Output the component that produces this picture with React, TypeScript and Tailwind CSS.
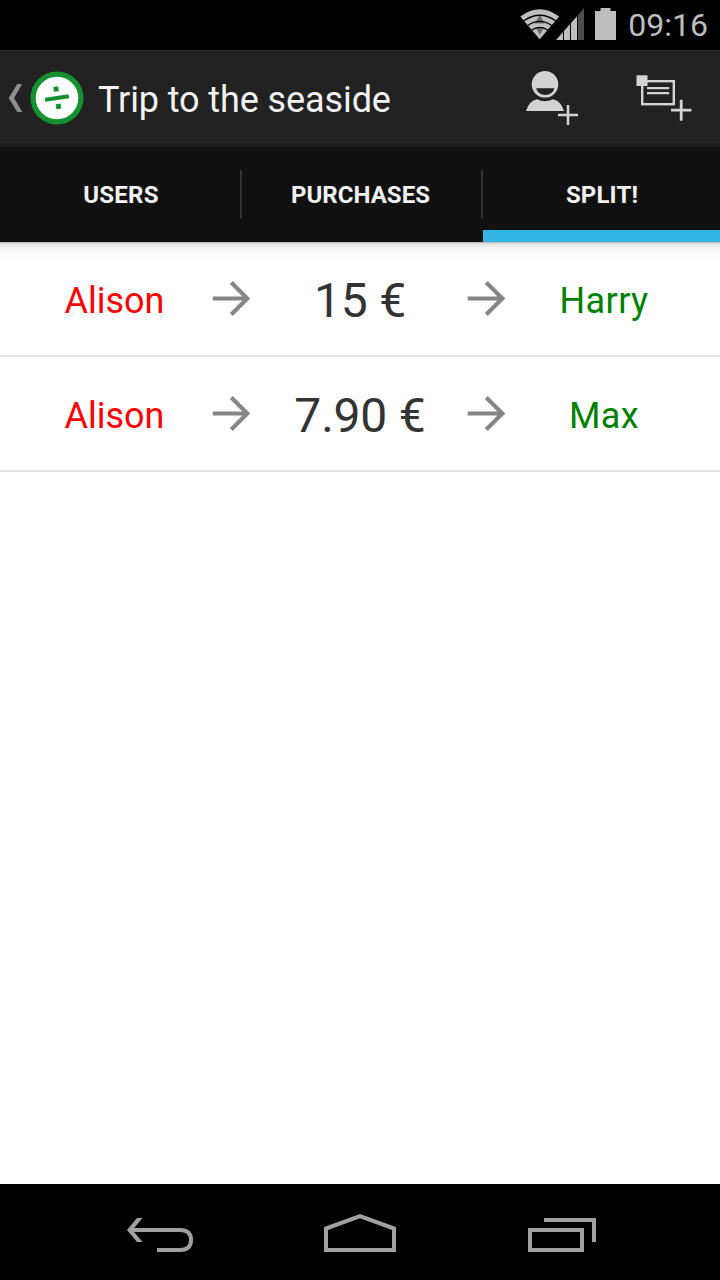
import clsx from "clsx"

type Debt = { from: string; amount: string; to: string }

const debts: Debt[] = [
    { from: "Alison", amount: "15 €", to: "Harry" },
    { from: "Alison", amount: "7.90 €", to: "Max" },
]

const tabs = [
    { label: "USERS", width: "w-[240px]", text: "tracking-[0.3px] pl-[2px]" },
    { label: "PURCHASES", width: "w-[241px]", text: "tracking-[0.05px] pr-[2px]" },
    { label: "SPLIT!", width: "w-[239px]", text: "tracking-[0.15px] pl-px" },
]

function StatusBar() {
    return (
        <div className="h-[50px] bg-black flex items-center justify-end pr-3">
            <svg width="100" height="50" viewBox="520 0 100 50" className="mr-[8px]">
                <path d="M520.300 16.500Q539.700 1.800 559.200 16.500L539.700 39.300Z" fill="#bebebe" />
                <path d="M539.700 14.500L544.500 23.500H535Z M535.500 27H544.200L539.800 35Z" fill="#6b6b6b" />
                <g fill="none" stroke="#000" strokeWidth="1.300">
                    <path d="M523.500 21Q539.700 9.500 556 21" />
                    <path d="M527.500 25.700Q539.700 17 552 25.700" />
                    <path d="M531.500 30.300Q539.700 24.500 548 30.300" />
                </g>
                <path d="M556 40L578 14.900V40Z" fill="#bebebe" />
                <path d="M578 14.900L584 8V40H578Z" fill="#4c4c4c" />
                <path d="M563.500 28V40M570.500 20V40M577.500 12V40" stroke="#000" strokeWidth="1" />
                <path d="M600.500 8H610.500V11H616V40H595V11H600.500Z" fill="#bebebe" />
            </svg>
            <span className="text-[32px] leading-none text-[#bebebe]">09:16</span>
        </div>
    )
}

function AddUserIcon() {
    return (
        <svg width="54" height="56" viewBox="525 70 54 56">
            <circle cx="545" cy="84.300" r="13.300" fill="#d3d3d3" />
            <path d="M536 88.300H554.500Q552.500 95 545.200 95Q538 95 536 88.300Z" fill="#222" />
            <path d="M526 111Q529 101 537 99.300Q545 103.200 553 99.300Q561 101 564 111Z" fill="#d3d3d3" />
            <path d="M558 115H578M568 105V125" stroke="#d3d3d3" strokeWidth="2.600" />
        </svg>
    )
}

function AddPurchaseIcon() {
    return (
        <svg width="56" height="56" viewBox="636 70 56 56">
            <rect x="642.200" y="81.200" width="31.600" height="23" fill="none" stroke="#d3d3d3" strokeWidth="2.400" />
            <rect x="636.500" y="75.300" width="11" height="10.700" fill="#d3d3d3" />
            <path d="M647 88.200H669.200M647 93.200H669.200" stroke="#d3d3d3" strokeWidth="2.200" />
            <path d="M671 110.200H691.500M681.200 99.700V120.700" stroke="#d3d3d3" strokeWidth="2.800" />
        </svg>
    )
}

function ActionBar() {
    return (
        <header className="h-[97px] bg-[#222] border-t border-[#303030] border-b-4 border-b-[#1c1c1c] flex items-center pl-2 pr-7 pt-[2px]">
            <svg width="76" height="56" viewBox="8 70 76 56">
                <path d="M17.300 84H22.300L14 98L22.300 112H17.300L8.700 98Z" fill="#8f8f8f" />
                <circle cx="57" cy="98" r="23.900" fill="#fff" stroke="#159130" strokeWidth="5.200" />
                <g fill="#159130" transform="rotate(-8 57 98)">
                    <rect x="45" y="96" width="24" height="4" />
                    <rect x="54.800" y="86.500" width="5" height="5" />
                    <rect x="54.800" y="104" width="5" height="5" />
                </g>
            </svg>
            <h1 className="flex-1 ml-[14px] pt-[3px] text-[36px] leading-none tracking-[-0.1px] text-[#f3f3f3]">
                Trip to the seaside
            </h1>
            <div className="flex gap-[57px]">
                <AddUserIcon />
                <AddPurchaseIcon />
            </div>
        </header>
    )
}

function Tabs() {
    return (
        <nav className="h-[95px] bg-[#111] flex">
            {tabs.map((tab, i) => (
                <div key={tab.label} className={clsx("flex", tab.width)}>
                    {i > 0 && <span className="w-[2px] h-12 mt-[23px] bg-[#333]" />}
                    <div
                        className={clsx(
                            "flex-1 flex items-center justify-center border-b-12 pt-[12px]",
                            i === 2 ? "border-[#33b5e5]" : "border-[#111]"
                        )}
                    >
                        <span className={clsx("text-[24px] leading-none font-bold text-[#f3f3f3]", tab.text)}>
                            {tab.label}
                        </span>
                    </div>
                </div>
            ))}
        </nav>
    )
}

function Arrow() {
    return (
        <svg width="38" height="36" viewBox="212 281 38 36" className="shrink-0">
            <path d="M212.700 298.500H247M231.300 282.500L247.300 298.500L231.300 314.500" fill="none" stroke="#868686" strokeWidth="4.200" />
        </svg>
    )
}

function DebtRow({ from, amount, to }: Debt) {
    return (
        <li className="h-[115px] border-b-2 border-[#e3e3e3] flex items-center pl-[17px] pr-[20px]">
            <span className="w-[195px] pt-[5px] text-center text-[36px] text-[#f00]">{from}</span>
            <Arrow />
            <span className="w-[217px] pt-[5px] pl-[3px] text-center text-[48px] tracking-[-0.2px] text-[#333]">{amount}</span>
            <Arrow />
            <span className="w-[195px] pt-[5px] pl-[3px] text-center text-[36px] tracking-[0.4px] text-[#008000]">{to}</span>
        </li>
    )
}

function NavBar() {
    return (
        <footer className="h-24 bg-black flex items-center justify-between pt-[2px] pl-[126px] pr-[123px]">
            <svg width="68" height="40" viewBox="126 1213 68 40" fill="none" stroke="#a0a0a0" strokeWidth="4">
                <path d="M131 1230H180Q191 1230 191 1240Q191 1250 180 1250H157" />
                <path d="M137 1218H142.500L132.500 1230L142.500 1242H137L127 1230Z" fill="#a0a0a0" stroke="none" />
            </svg>
            <svg width="72" height="40" viewBox="324 1213 72 40" fill="none" stroke="#a0a0a0" strokeWidth="4" className="-ml-[2px]">
                <path d="M326 1250V1228.500L360 1216.200L394 1228.500V1250Z" />
            </svg>
            <svg width="69" height="40" viewBox="528 1213 69 40" fill="none" stroke="#a0a0a0" strokeWidth="4">
                <path d="M530 1230H582V1250H530Z" />
                <path d="M544 1220H594V1242" />
            </svg>
        </footer>
    )
}

function App() {
    return (
        <div className="w-[720px] h-[1280px] flex flex-col bg-white font-[Roboto,sans-serif]">
            <StatusBar />
            <ActionBar />
            <Tabs />
            <ul className="flex-1 bg-[linear-gradient(#b4b4b4_0px,#e4e4e4_2px,#f4f4f4_6px,#fbfbfb_12px,#ffffff_18px)]">
                {debts.map((debt) => (
                    <DebtRow key={debt.to} {...debt} />
                ))}
            </ul>
            <NavBar />
        </div>
    )
}

export default App
